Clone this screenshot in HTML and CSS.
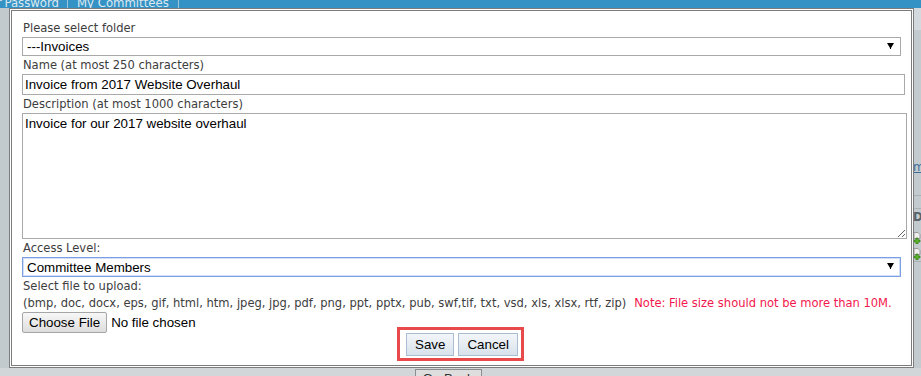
FILE: index.html
```html
<!DOCTYPE html>
<html lang="en">
<head>
    <meta charset="UTF-8">
    <title>Upload Document</title>
    <link rel="stylesheet" href="styles.css">
</head>
<body>
    <div class="page">
        <div class="topnav">
            <span class="tab tab-first">Change Your Password</span>
            <span class="tab">My Committees</span>
        </div>
        <div class="page-body">
            <div class="page-main"></div>
            <div class="page-side">
                <div class="side-head"></div>
                <a class="side-link" href="#">more</a>
                <div class="side-rule"></div>
                <div class="side-title">Docs</div>
                <div class="side-icon">
                    <svg width="8" height="12" viewBox="0 0 8 12"><path d="M1 0.5h4l2 2v4H1z" fill="#eee" stroke="#999"/><path d="M3 6h2v2h2v2H5v2H3v-2H1V8h2z" fill="#5bb52c" stroke="#2d6e12" stroke-width="0.6"/></svg>
                </div>
                <div class="side-icon">
                    <svg width="8" height="12" viewBox="0 0 8 12"><path d="M1 0.5h4l2 2v4H1z" fill="#eee" stroke="#999"/><path d="M3 6h2v2h2v2H5v2H3v-2H1V8h2z" fill="#5bb52c" stroke="#2d6e12" stroke-width="0.6"/></svg>
                </div>
                <div class="side-rule"></div>
            </div>
        </div>
        <div class="page-foot">
            <button class="back-btn">Go Back</button>
        </div>
    </div>

    <div class="dialog">
        <label class="field-label">Please select folder</label>
        <div class="select-wrap">
            <select class="field-select">
                <option>---Invoices</option>
            </select>
            <svg class="select-arrow" width="7" height="6" viewBox="0 0 7 6"><path d="M0 0h7L4 5v1H3V5z" fill="#000"/></svg>
        </div>

        <label class="field-label">Name (at most 250 characters)</label>
        <input class="field-input" type="text" value="Invoice from 2017 Website Overhaul">

        <label class="field-label">Description (at most 1000 characters)</label>
        <textarea class="field-textarea">Invoice for our 2017 website overhaul</textarea>

        <label class="field-label">Access Level:</label>
        <div class="select-wrap select-focus">
            <select class="field-select">
                <option>Committee Members</option>
            </select>
            <svg class="select-arrow" width="7" height="6" viewBox="0 0 7 6"><path d="M0 0h7L4 5v1H3V5z" fill="#000"/></svg>
        </div>

        <div class="field-label small-line">Select file to upload:</div>
        <div class="field-label small-line">(bmp, doc, docx, eps, gif, html, htm, jpeg, jpg, pdf, png, ppt, pptx, pub, swf,tif, txt, vsd, xls, xlsx, rtf, zip)<span class="note">Note: File size should not be more than 10M.</span></div>
        <div class="file-row">
            <input class="file-input" type="file">
        </div>

        <div class="actions">
            <div class="action-group">
                <button class="btn">Save</button>
                <button class="btn">Cancel</button>
            </div>
        </div>
    </div>
</body>
</html>
```

FILE: styles.css
```css
body {
    margin: 0;
    padding: 0;
    background: #c2cacd;
    font-family: "DejaVu Sans Condensed", "DejaVu Sans", sans-serif;
    overflow: hidden;
}

.page {
    height: 376px;
    display: flex;
    flex-direction: column;
}

.topnav {
    height: 8px;
    display: flex;
    align-items: flex-start;
    background: #3592c4;
    overflow: hidden;
    white-space: nowrap;
}

.tab {
    flex: none;
    margin-top: -5px;
    padding: 0 9px;
    font-size: 13px;
    line-height: 16px;
    color: #dde9f1;
    border-right: 1px solid #9cc5dc;
}

.tab-first {
    width: 59px;
    padding: 0 8px 0 0;
    overflow: hidden;
    direction: rtl;
    text-align: right;
    word-spacing: -1px;
}

.page-body {
    flex: 1;
    display: flex;
}

.page-main {
    flex: 1;
}

.page-side {
    width: 8px;
    display: flex;
    flex-direction: column;
    background: #c4cbce;
}

.side-head {
    height: 22px;
    background: #d3d9dc;
    margin-bottom: 129px;
}

.side-link {
    color: #3c6e9c;
    font-size: 13px;
    line-height: 16px;
    text-decoration: underline;
    white-space: nowrap;
    overflow: hidden;
    margin-bottom: 20px;
}

.side-rule {
    height: 1px;
    background: #a9b1b4;
    margin-bottom: 12px;
}

.side-title {
    color: #59636b;
    font-weight: bold;
    font-size: 13px;
    line-height: 16px;
    overflow: hidden;
    margin-bottom: 4px;
    border-top: 1px solid #a9b1b4;
}

.side-icon {
    height: 14px;
    margin-bottom: 2px;
}

.page-foot {
    height: 8px;
    text-align: center;
    background: #d3d6d8;
    overflow: hidden;
}

.back-btn {
    margin: 1px 0 0 -25px;
    width: 67px;
    height: 20px;
    padding: 0;
    font: 13.33px "Liberation Sans", Arial, sans-serif;
    background: #dedede;
    border: 1px solid #8d8d8d;
    color: #333;
    line-height: 12px;
}

/* upload dialog */
.dialog {
    position: absolute;
    left: 9px;
    top: 8px;
    width: 905px;
    height: 360px;
    box-sizing: border-box;
    border: 3px double #7c7c7c;
    background: #fff;
    padding: 8px 4px 0 10px;
}

.field-label {
    display: block;
    font-size: 12.8px;
    line-height: 18px;
    color: #3d3d3d;
    padding-left: 1px;
    white-space: nowrap;
}

.small-line {
    line-height: 17px;
}

.select-wrap {
    position: relative;
    width: 879px;
}

.field-select {
    display: block;
    width: 100%;
    height: 19px;
    margin: 0;
    padding: 0 0 0 4px;
    -webkit-appearance: none;
    appearance: none;
    border: 1px solid #a9a9a9;
    border-radius: 0;
    background: #fff;
    color: #000;
    font: 13.33px "Liberation Sans", Arial, sans-serif;
    outline: none;
}

.select-arrow {
    position: absolute;
    right: 7px;
    top: 6px;
}

.select-focus .field-select {
    height: 20px;
    border-color: #7c9fe4;
    box-shadow: inset 0 0 0 1px #d3dff7;
}

.field-input {
    display: block;
    width: 883px;
    height: 21px;
    box-sizing: border-box;
    margin: 0;
    padding: 1px 2px;
    border: 1px solid #a9a9a9;
    font: 13.33px "Liberation Sans", Arial, sans-serif;
    color: #000;
}

.field-textarea {
    display: block;
    width: 885px;
    height: 126px;
    box-sizing: border-box;
    margin: 0;
    padding: 2px 2px;
    border: 1px solid #a9a9a9;
    font: 13.33px "Liberation Sans", Arial, sans-serif;
    color: #000;
    resize: both;
}

.note {
    margin-left: 8px;
    color: #f3174d;
}

.file-row {
    height: 18px;
    margin-top: 1px;
}

.file-input {
    font: 13.33px "Liberation Sans", Arial, sans-serif;
    color: #000;
}

.file-input::file-selector-button {
    font: inherit;
    height: 21px;
    padding: 0 6px;
    margin: 0 4px 0 0;
    border: 1px solid #a6a6a6;
    border-radius: 2px;
    background: linear-gradient(#f7f7f7, #dddddd);
    color: #000;
}

.actions {
    text-align: center;
    padding-right: 8px;
}

.action-group {
    display: inline-flex;
    gap: 4px;
    padding: 3px 3px 2px 6px;
    outline: 3px solid #e8494a;
}

.btn {
    height: 23px;
    padding: 0 8px;
    font: 13.33px "Liberation Sans", Arial, sans-serif;
    color: #000;
    border: 1px solid #a9bed3;
    border-radius: 0;
    background: linear-gradient(#f3f6f9, #d8e2eb);
}
```
